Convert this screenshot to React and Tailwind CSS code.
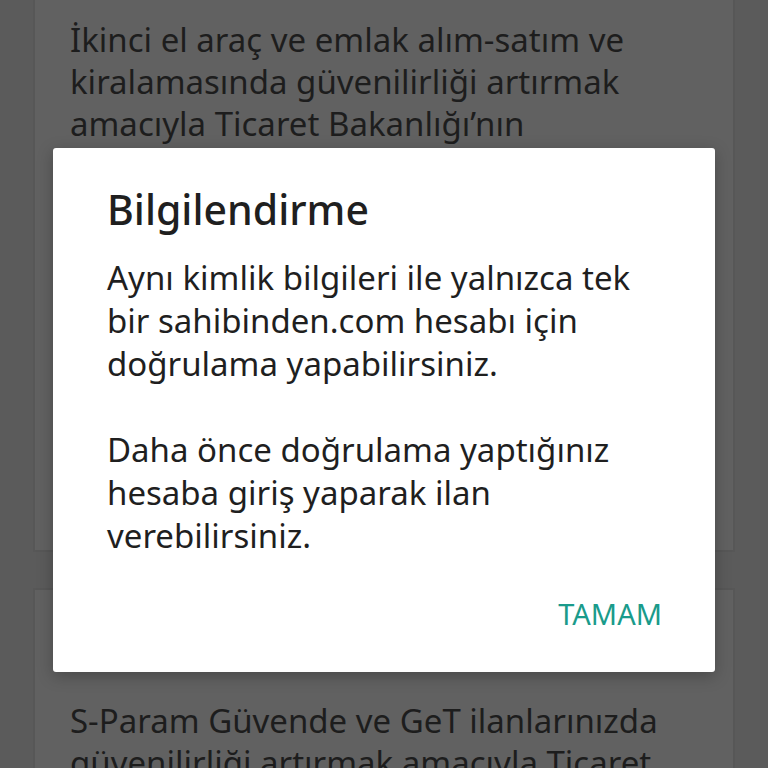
export default function App() {
  const font = { fontFamily: '"Noto Sans", "Open Sans", sans-serif' }
  return (
    <div className="relative w-[768px] h-[768px] overflow-hidden bg-[#5b5b5b]" style={font}>
      <div className="flex flex-col gap-[36px] px-[33px]">
        <div className="h-[552px] bg-[#616161] border-x-2 border-b-2 border-[#575757] pl-[35px] pr-[24px] pt-[19px]">
          <p className="text-[33px] leading-[42px] text-[#1d1d1d]">
            İkinci el araç ve emlak alım-satım ve kiralamasında güvenilirliği artırmak amacıyla Ticaret Bakanlığı’nın
          </p>
        </div>
        <div className="h-[300px] bg-[#616161] border-x-2 border-t-2 border-[#575757] pl-[35px] pr-[24px] pt-[110px]">
          <p className="text-[33px] leading-[42px] text-[#1d1d1d]">
            S-Param Güvende ve GeT ilanlarınızda güvenilirliği artırmak amacıyla Ticaret Bakanlığı’nın
          </p>
        </div>
      </div>

      <div className="absolute left-[53px] top-[148px] w-[662px] h-[524px] bg-white rounded-[3px] shadow-[0_4px_16px_rgba(0,0,0,0.25)] flex flex-col px-[54px] pt-[33px]">
        <h2 className="text-[41px] leading-[56px] font-medium text-[#1f1f1f]">Bilgilendirme</h2>
        <div className="mt-[19px] text-[33px] leading-[43px] text-[#1f1f1f]">
          <p>Aynı kimlik bilgileri ile yalnızca tek bir sahibinden.com hesabı için doğrulama yapabilirsiniz.</p>
          <p className="mt-[43px]">Daha önce doğrulama yaptığınız hesaba giriş yaparak ilan verebilirsiniz.</p>
        </div>
        <div className="flex justify-end mt-[40px] mr-[-1px]">
          <button className="text-[29px] leading-[34px] text-[#1a9b8b]">TAMAM</button>
        </div>
      </div>
    </div>
  )
}
